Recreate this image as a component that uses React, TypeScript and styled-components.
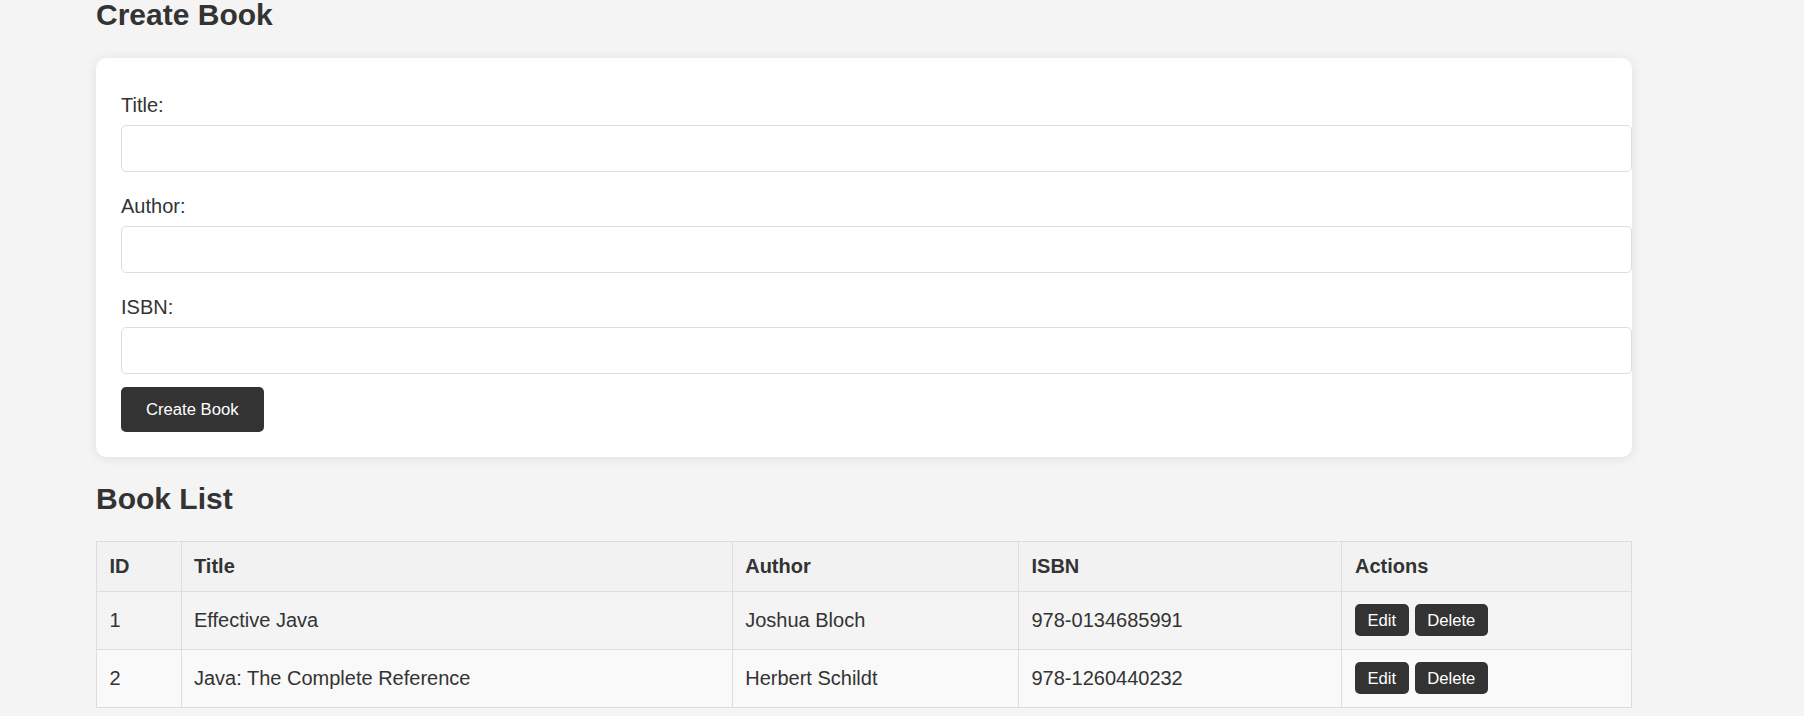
import React from "react";
import styled, { createGlobalStyle } from "styled-components";

const GlobalStyle = createGlobalStyle`
  html, body {
    margin: 0;
    padding: 0;
    background: #f4f4f4;
  }
  body {
    font-family: "Liberation Sans", Arial, sans-serif;
    color: #333;
    font-size: 20px;
  }
  * { box-sizing: border-box; }
`;

const Page = styled.div`
  width: 1536px;
  margin-left: 96px;
  display: flex;
  flex-direction: column;
`;

const Heading = styled.h2<{ $first?: boolean }>`
  font-size: 30px;
  font-weight: bold;
  line-height: 34px;
  margin: ${(p) => (p.$first ? "-2px 0 26px" : "25.5px 0 25px")};
  color: #333;
`;

const Card = styled.form`
  background: #fff;
  border-radius: 10px;
  box-shadow: 0 1px 11px rgba(0, 0, 0, 0.09);
  padding: 36px 0 24.5px 25px;
  display: flex;
  flex-direction: column;
  align-items: flex-start;
`;

const Field = styled.div`
  width: 100%;
  display: flex;
  flex-direction: column;
  & + & {
    margin-top: 23px;
  }
`;

const Label = styled.label`
  display: block;
  font-size: 20px;
  line-height: 23px;
  margin-bottom: 8px;
  color: #333;
`;

const Input = styled.input`
  width: 100%;
  height: 47px;
  border: 1px solid #ddd;
  border-radius: 5px;
  padding: 0 12.5px;
  font-family: inherit;
  font-size: 20px;
  background: #fff;
  outline: none;
`;

const DarkButton = styled.button<{ $size?: "lg" | "sm" }>`
  background: #333;
  color: #fff;
  border: none;
  border-radius: 5px;
  font-family: "Liberation Sans", Arial, sans-serif;
  font-size: 16.67px;
  line-height: 19px;
  cursor: pointer;
  height: ${(p) => (p.$size === "lg" ? "45px" : "32px")};
  padding: ${(p) => (p.$size === "lg" ? "0 25px" : "0 12.5px")};
  margin-top: ${(p) => (p.$size === "lg" ? "13px" : "0")};
`;

const Table = styled.table`
  width: 1536px;
  border-collapse: collapse;
  table-layout: fixed;
  border: 1px solid #ddd;
  font-size: 20px;
`;

const Th = styled.th`
  background: #f2f2f2;
  border: 1px solid #ddd;
  text-align: left;
  font-weight: bold;
  line-height: 23px;
  padding: 13px 12.5px 12.5px;
  color: #333;
`;

const Row = styled.tr<{ $even?: boolean }>`
  background: ${(p) => (p.$even ? "#f9f9f9" : "transparent")};
`;

const Td = styled.td`
  border: 1px solid #ddd;
  line-height: 23px;
  padding: 12.5px;
  vertical-align: middle;
  color: #333;
`;

const Actions = styled.div`
  display: flex;
  gap: 6px;
  align-items: center;
`;

const books = [
  { id: 1, title: "Effective Java", author: "Joshua Bloch", isbn: "978-0134685991" },
  { id: 2, title: "Java: The Complete Reference", author: "Herbert Schildt", isbn: "978-1260440232" },
];

export default function App() {
  return (
    <>
      <GlobalStyle />
      <Page>
        <Heading $first>Create Book</Heading>
        <Card onSubmit={(e) => e.preventDefault()}>
          <Field>
            <Label htmlFor="title">Title:</Label>
            <Input id="title" type="text" />
          </Field>
          <Field>
            <Label htmlFor="author">Author:</Label>
            <Input id="author" type="text" />
          </Field>
          <Field>
            <Label htmlFor="isbn">ISBN:</Label>
            <Input id="isbn" type="text" />
          </Field>
          <DarkButton $size="lg" type="submit">Create Book</DarkButton>
        </Card>
        <Heading>Book List</Heading>
        <Table>
          <colgroup>
            <col style={{ width: 84.5 }} />
            <col style={{ width: 551.2 }} />
            <col style={{ width: 286.3 }} />
            <col style={{ width: 323.5 }} />
            <col />
          </colgroup>
          <thead>
            <tr>
              <Th>ID</Th>
              <Th>Title</Th>
              <Th>Author</Th>
              <Th>ISBN</Th>
              <Th>Actions</Th>
            </tr>
          </thead>
          <tbody>
            {books.map((b, i) => (
              <Row key={b.id} $even={i % 2 === 1}>
                <Td>{b.id}</Td>
                <Td>{b.title}</Td>
                <Td>{b.author}</Td>
                <Td>{b.isbn}</Td>
                <Td>
                  <Actions>
                    <DarkButton type="button">Edit</DarkButton>
                    <DarkButton type="button">Delete</DarkButton>
                  </Actions>
                </Td>
              </Row>
            ))}
          </tbody>
        </Table>
      </Page>
    </>
  );
}
